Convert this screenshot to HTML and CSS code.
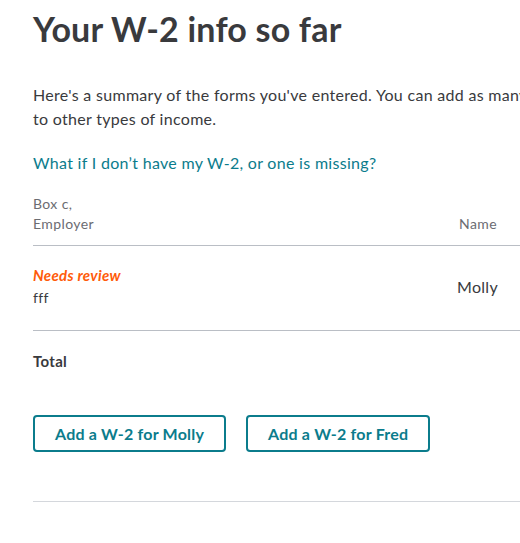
FILE: index.html
```html
<!DOCTYPE html>
<html lang="en">
<head>
<meta charset="utf-8">
<title>Your W-2 info so far</title>
<link rel="stylesheet" href="styles.css">
</head>
<body>
<main class="page">
  <h1 class="title">Your W-2 info so far</h1>
  <p class="intro">Here's a summary of the forms you've entered. You can add as many as you need before moving on<br>to other types of income.</p>
  <a class="help-link" href="#">What if I don’t have my W-2, or one is missing?</a>

  <div class="table">
    <div class="row head">
      <div class="cell emp">Box c,<br>Employer</div>
      <div class="cell name">Name</div>
      <div class="cell amt">Box 1, Wages</div>
    </div>
    <div class="row body">
      <div class="cell emp">
        <div class="review">Needs review</div>
        <div class="emp-name">fff</div>
      </div>
      <div class="cell name">Molly</div>
      <div class="cell amt"></div>
    </div>
    <div class="row total">
      <div class="cell emp">Total</div>
      <div class="cell name"></div>
      <div class="cell amt"></div>
    </div>
  </div>

  <div class="actions">
    <button class="btn" type="button">Add a W-2 for Molly</button>
    <button class="btn" type="button">Add a W-2 for Fred</button>
  </div>
  <hr class="bottom-rule">
</main>
</body>
</html>
```

FILE: styles.css
```css
html, body {
  margin: 0;
  padding: 0;
  background: #ffffff;
  overflow: hidden;
}

body {
  font-family: Lato, "Noto Sans", "Liberation Sans", sans-serif;
  color: #393a3d;
  letter-spacing: 0.3px;
}

.page {
  width: 820px;
  padding: 0 0 0 33px;
  box-sizing: content-box;
}

.title {
  margin: 0;
  padding-top: 7px;
  font-size: 34px;
  line-height: 44px;
  font-weight: 700;
  letter-spacing: 0.2px;
  color: #393a3d;
}

.intro {
  margin: 32px 0 0;
  white-space: nowrap;
  font-size: 16px;
  line-height: 24px;
  color: #393a3d;
}

.help-link {
  display: block;
  margin-top: 20px;
  font-size: 16px;
  line-height: 24px;
  color: #0b7c8c;
  text-decoration: none;
}

.table {
  margin-top: 19px;
  width: 760px;
}

.row {
  display: grid;
  grid-template-columns: 424px 110px 1fr;
}

.row.head {
  font-size: 14px;
  line-height: 20px;
  letter-spacing: 0.4px;
  color: #6b6c72;
  padding-bottom: 11px;
  border-bottom: 1px solid #babec5;
  align-items: end;
}

.row.head .name {
  padding-left: 2px;
}

.row.body {
  padding: 19px 0 21px;
  border-bottom: 1px solid #babec5;
  align-items: center;
}

.review {
  font-size: 15px;
  line-height: 20px;
  font-style: italic;
  font-weight: 700;
  color: #ff5b0a;
}

.emp-name {
  margin-top: 2px;
  font-size: 14px;
  line-height: 22px;
  color: #393a3d;
}

.row.body .name {
  font-size: 16px;
  line-height: 24px;
  color: #393a3d;
}

.row.total {
  padding-top: 20px;
  font-size: 15px;
  line-height: 20px;
  font-weight: 700;
  color: #393a3d;
}

.actions {
  display: flex;
  gap: 20px;
  margin-top: 44px;
}

.btn {
  height: 37px;
  padding: 0 20px;
  background: #ffffff;
  border: 2px solid #0b7c8c;
  border-radius: 4px;
  font-family: Lato, "Noto Sans", "Liberation Sans", sans-serif;
  font-size: 16px;
  font-weight: 700;
  letter-spacing: 0.2px;
  color: #0b7c8c;
  cursor: pointer;
}

.bottom-rule {
  margin: 49px 0 0;
  border: 0;
  border-top: 1px solid #d4d7dc;
  width: 760px;
}
```
